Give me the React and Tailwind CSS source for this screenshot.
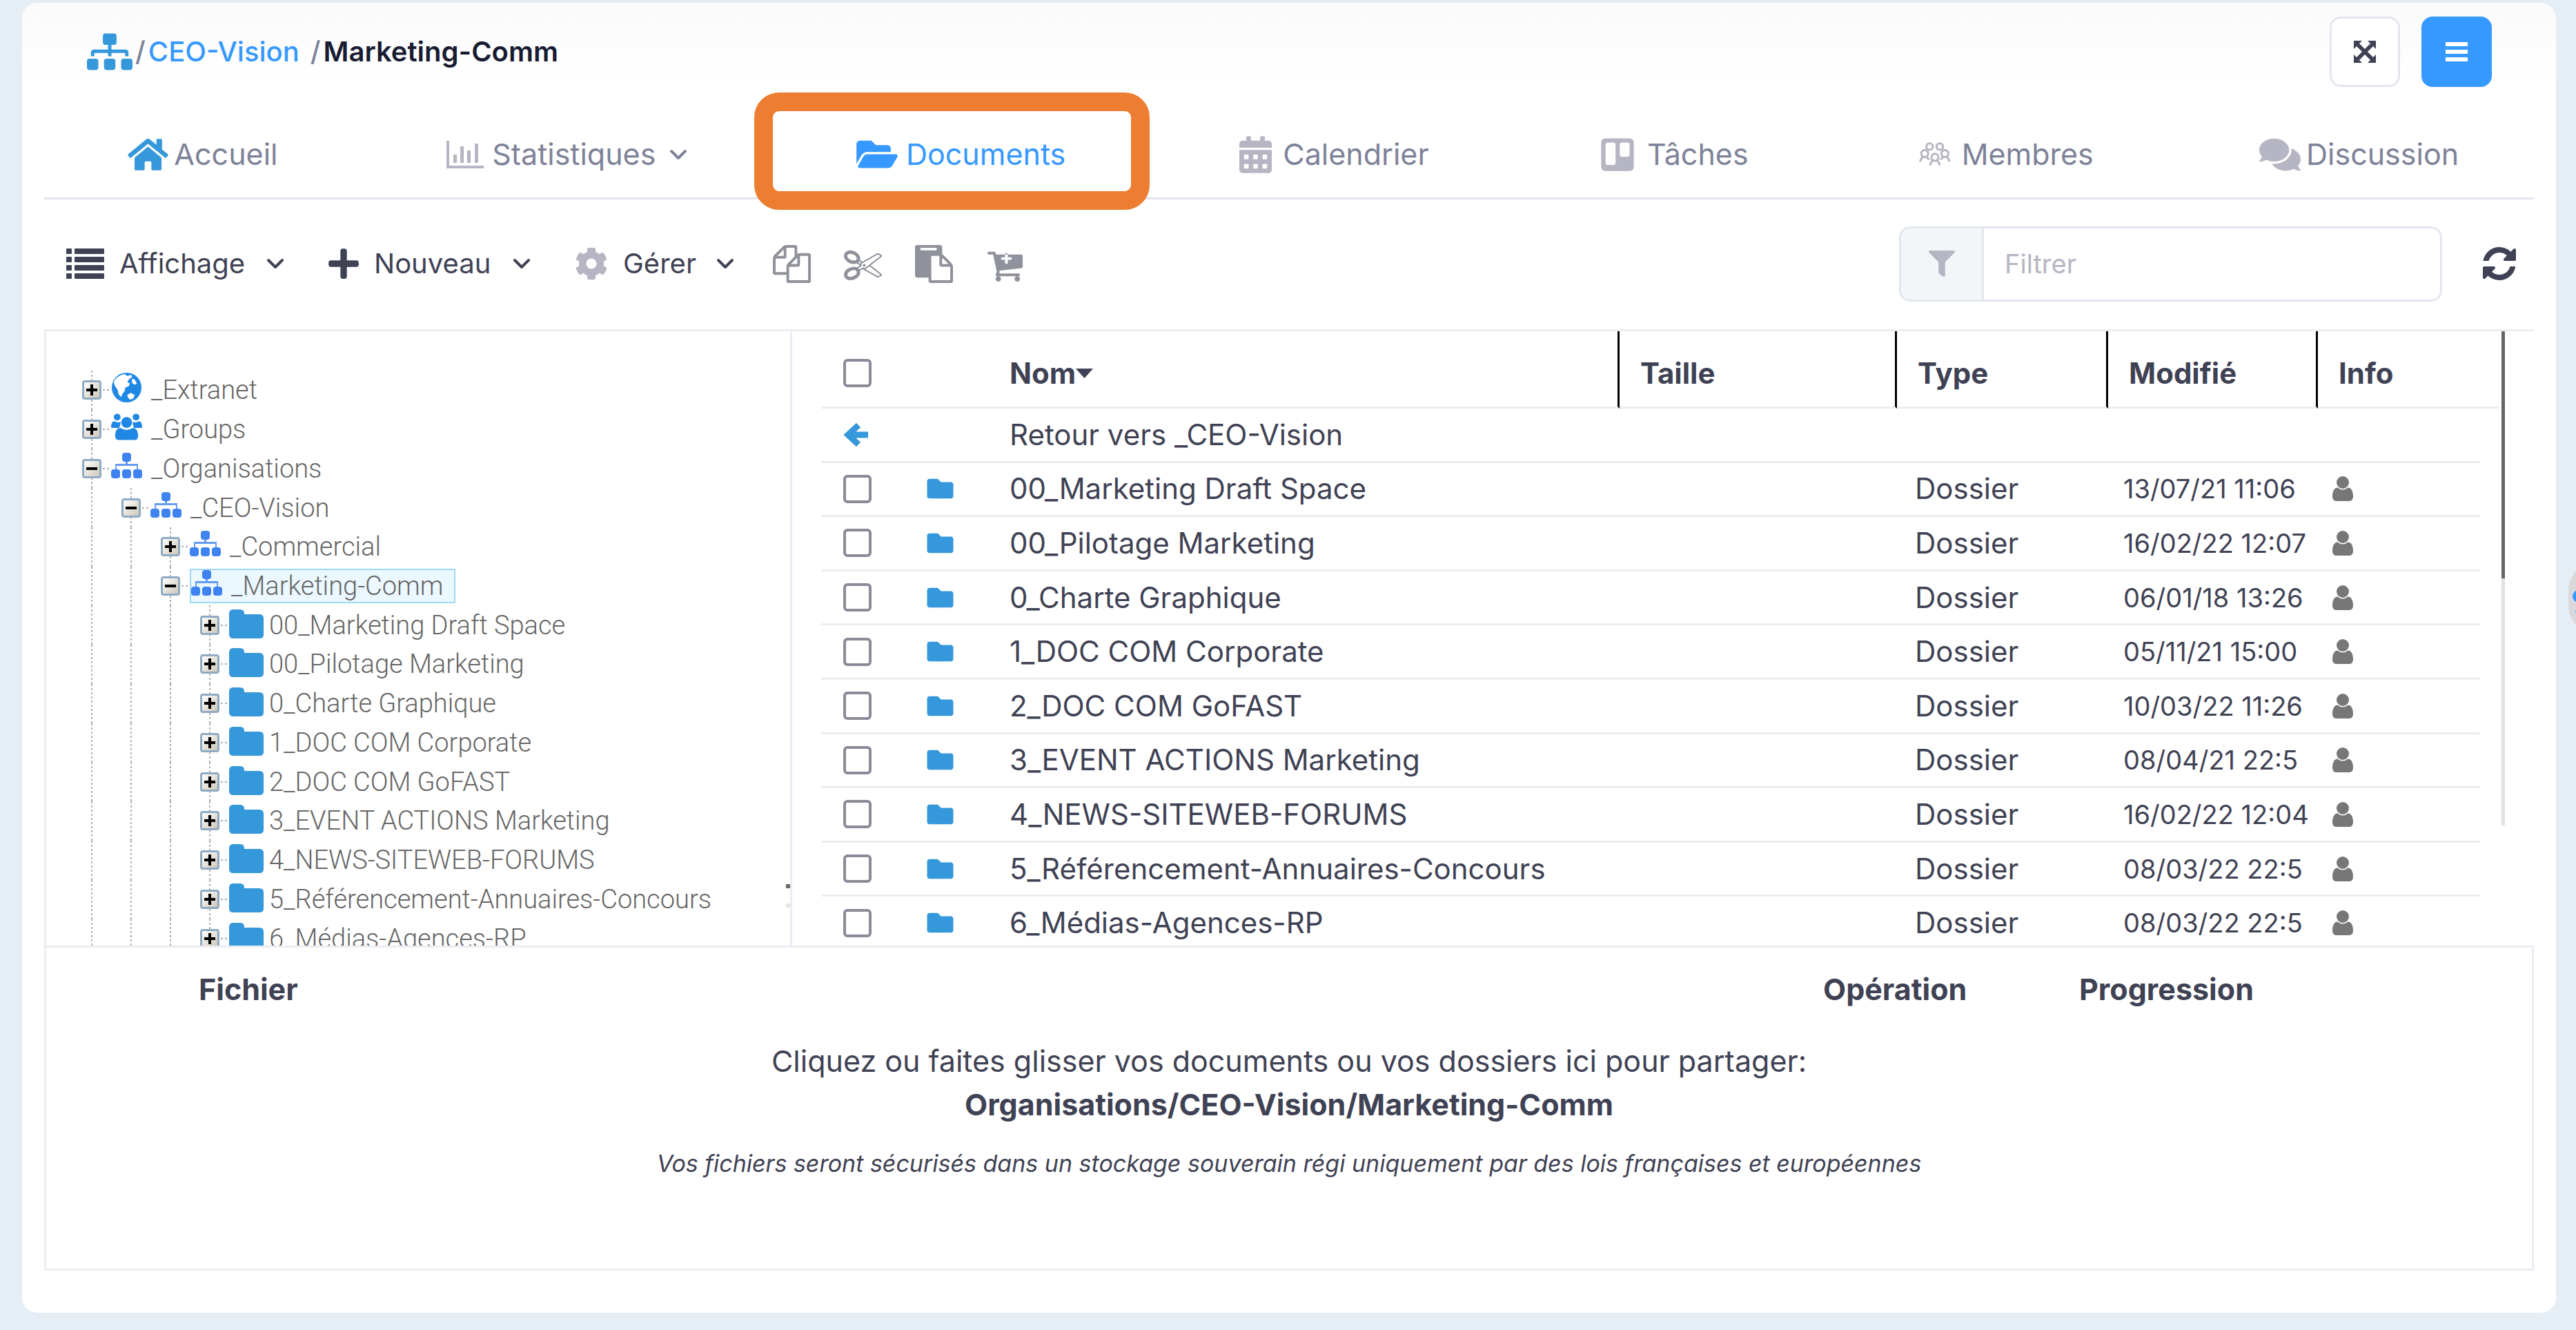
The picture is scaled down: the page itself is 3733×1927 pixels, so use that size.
import React from "react";
import {
  FaHome,
  FaFolderOpen,
  FaFolder,
  FaCalendarAlt,
  FaTrello,
  FaComments,
  FaPlus,
  FaCog,
  FaFilter,
  FaSitemap,
} from "react-icons/fa";

const BLUE = "text-[#3498db]";

/* ---------- icons ---------- */

function Glyph({ d, className, viewBox = "0 0 1792 1792" }) {
  return (
    <svg viewBox={viewBox} className={className} fill="currentColor" aria-hidden="true">
      <path d={d} />
    </svg>
  );
}

const COPY =
  "M1696 384q40 0 68 28t28 68v1216q0 40-28 68t-68 28h-960q-40 0-68-28t-28-68v-288h-544q-40 0-68-28t-28-68v-672q0-40 20-88t48-76l408-408q28-28 76-48t88-20h416q40 0 68 28t28 68v328q68-40 128-40h416zm-544 213l-299 299h299v-299zm-640-384l-299 299h299v-299zm196 647l316-316v-416h-384v416q0 40-28 68t-68 28h-416v640h512v-256q0-40 20-88t48-76zm956 804v-1152h-384v416q0 40-28 68t-68 28h-416v640h896z";
const CUT =
  "M960 896q26 0 45 19t19 45-19 45-45 19-45-19-19-45 19-45 45-19zm300 64l507 398q28 20 25 56-5 35-35 51l-128 64q-13 7-29 7-17 0-31-8l-690-387-110 66q-8 4-12 5 14 49 10 97-7 77-56 147.5t-132 123.5q-132 84-277 84-136 0-222-78-90-84-79-207 7-76 56-147t131-124q132-84 278-84 83 0 151 31 9-13 22-22l122-73-122-73q-13-9-22-22-68 31-151 31-146 0-278-84-82-53-131-124t-56-147q-5-59 15.5-113t63.5-93q85-79 222-79 145 0 277 84 83 52 132 123t56 148q4 48-10 97 4 1 12 5l110 66 690-387q14-8 31-8 16 0 29 7l128 64q30 16 35 51 3 36-25 56zm-681-260q46-42 21-108t-106-117q-92-59-192-59-74 0-113 36-46 42-21 108t106 117q92 59 192 59 74 0 113-36zm-85 745q81-51 106-117t-21-108q-39-36-113-36-100 0-192 59-81 51-106 117t21 108q39 36 113 36 100 0 192-59zm178-613l96 58v-11q0-36 33-56l14-8-79-44-26 26q-3 3-10 11t-12 12q-2 2-4 3.5t-3 2.5zm224 224l96 32 736-576-128-64-768 431v113l-160 96 9 8q2 2 7 6 4 4 11 12t11 12l26 26zm704 416l128-64-520-408-177 138q-2 3-13 7z";
const PASTE =
  "M768 1664h896v-640h-416q-40 0-68-28t-28-68v-416h-384v1152zm256-1440v-64q0-13-9.5-22.5t-22.5-9.5h-704q-13 0-22.5 9.5t-9.5 22.5v64q0 13 9.5 22.5t22.5 9.5h704q13 0 22.5-9.5t9.5-22.5zm256 672h299l-299-299v299zm512 128v672q0 40-28 68t-68 28h-960q-40 0-68-28t-28-68v-160h-544q-40 0-68-28t-28-68v-1344q0-40 28-68t68-28h1088q40 0 68 28t28 68v328q21 13 36 28l408 408q28 28 48 76t20 88z";
const CART =
  "M1216 640q0-26-19-45t-45-19h-128v-128q0-26-19-45t-45-19-45 19-19 45v128h-128q-26 0-45 19t-19 45 19 45 45 19h128v128q0 26 19 45t45 19 45-19 19-45v-128h128q26 0 45-19t19-45zm-512 960q0 53-37.5 90.5t-90.5 37.5-90.5-37.5-37.5-90.5 37.5-90.5 90.5-37.5 90.5 37.5 37.5 90.5zm896 0q0 53-37.5 90.5t-90.5 37.5-90.5-37.5-37.5-90.5 37.5-90.5 90.5-37.5 90.5 37.5 37.5 90.5zm128-1088v512q0 24-16 42.5t-41 21.5l-1044 122q1 7 4.5 21.5t6 26.5 2.5 22q0 16-24 64h920q26 0 45 19t19 45-19 45-45 19h-1024q-26 0-45-19t-19-45q0-14 11-39.5t29.5-59.5 20.5-38l-177-823h-204q-26 0-45-19t-19-45 19-45 45-19h256q16 0 28.5 6.5t20 15.5 13 24.5 7.5 26.5 5.5 29.5 4.5 25.5h1201q26 0 45 19t19 45z";
const USER =
  "M1536 1399q0 109-62.5 187t-150.5 78h-854q-88 0-150.5-78t-62.5-187q0-85 8.5-160.5t31.5-152 58.5-131 94-89 134.5-34.5q131 128 313 128t313-128q76 0 134.5 34.5t94 89 58.5 131 31.5 152 8.5 160.5zm-256-887q0 159-112.5 271.5t-271.5 112.5-271.5-112.5-112.5-271.5 112.5-271.5 271.5-112.5 271.5 112.5 112.5 271.5z";
const REFRESH =
  "M1639 1056q0 5-1 7-64 268-268 434.500t-478 166.500q-146 0-282.500-55t-243.500-157l-129 129q-19 19-45 19t-45-19-19-45v-448q0-26 19-45t45-19h448q26 0 45 19t19 45-19 45l-137 137q71 66 161 102t187 36q134 0 250-65t186-179q11-17 53-117 8-23 30-23h192q13 0 22.500 9.500t9.500 22.500zm25-800v448q0 26-19 45t-45 19h-448q-26 0-45-19t-19-45 19-45l138-138q-148-137-349-137-134 0-250 65t-186 179q-11 17-53 117-8 23-30 23h-199q-13 0-22.500-9.500t-9.500-22.500v-7q65-268 270-434.500t480-166.500q146 0 284 55.500t245 156.500l130-129q19-19 45-19t45 19 19 45z";

function ListIcon({ className }) {
  return (
    <svg viewBox="0 0 55 44" className={className} fill="currentColor" aria-hidden="true">
      {[0, 12, 24, 36].map((y) => (
        <g key={y}>
          <rect x="0" y={y} width="8" height="8" rx="1" />
          <rect x="12" y={y} width="43" height="8" rx="1" />
        </g>
      ))}
    </svg>
  );
}

function ChartIcon({ className }) {
  return (
    <svg viewBox="0 0 54 40" className={className} fill="currentColor" aria-hidden="true">
      <path d="M0 0h4v36h50v4H0z" />
      <path d="M10 20h5v12h-5zM20 8h5v24h-5zM30 14h5v18h-5zM41 4h5v28h-5z" />
    </svg>
  );
}

function MembersIcon({ className }) {
  return (
    <svg viewBox="0 0 136 104" className={className} fill="none" stroke="currentColor" strokeWidth="9" aria-hidden="true">
      <circle cx="45" cy="19" r="14" />
      <circle cx="89" cy="19" r="14" />
      <circle cx="24" cy="49" r="15" />
      <circle cx="111" cy="49" r="15" />
      <circle cx="68" cy="65" r="15" />
      <path d="M4 84q3-14 13-20M32 64q7 3 10 12M131 84q-3-14-13-20M103 64q-7 3-10 12M48 100q1-14 12-21M88 100q-1-14-12-21" />
    </svg>
  );
}

function Chevron({ className }) {
  return (
    <svg viewBox="0 0 26 16" className={className} fill="none" stroke="currentColor" strokeWidth="4" strokeLinecap="round" strokeLinejoin="round" aria-hidden="true">
      <path d="M3 3l10 10L23 3" />
    </svg>
  );
}

function ExpandIcon({ className }) {
  return (
    <svg viewBox="0 0 32 32" className={className} fill="currentColor" aria-hidden="true">
      <path d="M0 0h12L8 4l8 8 8-8-4-4h12v12l-4-4-8 8 8 8 4-4v12H20l4-4-8-8-8 8 4 4H0V20l4 4 8-8-8-8-4 4z" />
    </svg>
  );
}

function BackArrow({ className }) {
  return (
    <svg viewBox="0 0 36 36" className={className} fill="none" stroke="currentColor" strokeWidth="9" aria-hidden="true">
      <path d="M22 4L7 18l15 14M7 18h29" />
    </svg>
  );
}

function GlobeIcon({ className }) {
  return (
    <svg viewBox="0 0 46 46" className={className} aria-hidden="true">
      <circle cx="23" cy="23" r="22" fill="#2088e4" />
      <path fill="#fff" d="M5 12c4-5 9-8 15-9l4 3 6-2 1 4-4 2-3 5 4 2-2 4-5 2-1 5-3 4-2 5-4-4-1-6-4-6-2-5zM31 10l4 1 3 6-3 2-4-3zM24 34l5-3 6 3-2 5-5 2-3-3z" />
    </svg>
  );
}

function GroupIcon({ className }) {
  return (
    <svg viewBox="0 0 46 40" className={className} fill="#2088e4" aria-hidden="true">
      <circle cx="9" cy="6" r="5" />
      <circle cx="37" cy="6" r="5" />
      <path d="M0 21c0-6 2-9 5-9 3 2 6 2 9 1 0 4-1 6-2 9H2q-2 0-2-1zM46 21c0-6-2-9-5-9-3 2-6 2-9 1 0 4 1 6 2 9h10q2 0 2-1z" />
      <circle cx="23" cy="14" r="8" />
      <path d="M6 34c0-8 3-12 8-12q9 6 18 0c5 0 8 4 8 12q0 6-6 6H12q-6 0-6-6z" />
    </svg>
  );
}

function OrgIcon({ className }) {
  return (
    <svg viewBox="0 0 45 38" className={className} fill="#3f83f0" aria-hidden="true">
      <rect x="16" y="0" width="13" height="13" rx="4" />
      <path d="M21 12h3v4h15v8h-2v-5H8v5H6v-8h15z" opacity=".8" />
      <rect x="0" y="24" width="13" height="13" rx="4" />
      <rect x="16" y="24" width="13" height="13" rx="4" />
      <rect x="32" y="24" width="13" height="13" rx="4" />
    </svg>
  );
}

/* ---------- header ---------- */

function Header() {
  return (
    <header className="flex items-start justify-between pl-[62px] pr-[61px] pt-5">
      <nav aria-label="Fil d'Ariane" className="flex h-[102px] items-center text-[40px] font-medium text-[#7e8299]">
        <FaSitemap className="mr-1 h-[54px] w-[66px] text-[#3498db]" aria-hidden="true" />
        <span>/</span>
        <a href="#ceo" className="ml-1 text-[#3699ff]">CEO-Vision</a>
        <span className="ml-4">/</span>
        <a href="#marketing" className="ml-1 font-semibold text-[#181c32]">Marketing-Comm</a>
      </nav>
      <div className="flex gap-[31px]">
        <button type="button" aria-label="Plein écran" className="flex size-[102px] items-center justify-center rounded-2xl border-3 border-[#e4e6ef] bg-white text-[#3f4254]">
          <ExpandIcon className="size-8" />
        </button>
        <button type="button" aria-label="Menu" className="flex size-[102px] flex-col items-center justify-center gap-[5px] rounded-2xl bg-[#3699ff]">
          <span className="h-[6px] w-8 bg-white" />
          <span className="h-[6px] w-8 bg-white" />
          <span className="h-[6px] w-8 bg-white" />
        </button>
      </div>
    </header>
  );
}

const TABS = [
  { label: "Accueil", icon: <FaHome className={`h-[52px] w-[59px] ${BLUE}`} />, gap: "gap-2" },
  { label: "Statistiques", icon: <ChartIcon className="h-[40px] w-[54px]" />, gap: "gap-3", menu: true },
  { label: "Documents", icon: <FaFolderOpen className="h-[53px] w-[60px] text-[#3699ff]" />, gap: "gap-3", active: true },
  { label: "Calendrier", icon: <FaCalendarAlt className="h-[54px] w-[47px]" />, gap: "gap-4" },
  { label: "Tâches", icon: <FaTrello className="size-[54px]" />, gap: "gap-4" },
  { label: "Membres", icon: <MembersIcon className="h-[35px] w-[46px]" />, gap: "gap-4" },
  { label: "Discussion", icon: <FaComments className="h-[54px] w-[60px]" />, gap: "gap-2" },
];

function Tabs() {
  return (
    <nav className="mt-[35px] grid h-[128px] grid-cols-[460fr_596fr_546fr_536fr_448fr_516fr_507fr] border-b-3 border-[#e4e6ef] text-[43px] text-[#7e8299]">
      {TABS.map((t) => (
        <a
          key={t.label}
          href={`#${t.label}`}
          aria-current={t.active ? "page" : undefined}
          className={`relative flex items-center justify-center text-[#b5b5c3] ${t.gap}`}
        >
          {t.icon}
          <span className={t.active ? "text-[#3699ff]" : "text-[#7e8299]"}>{t.label}</span>
          {t.menu && <Chevron className="ml-2 h-4 w-[26px] text-[#7e8299]" />}
          {t.active && (
            <span className="pointer-events-none absolute -top-[27px] right-0 -bottom-[18px] -left-[27px] rounded-[36px] border-[27px] border-[#ed7d31]" />
          )}
        </a>
      ))}
    </nav>
  );
}

/* ---------- toolbar ---------- */

function Toolbar() {
  return (
    <div className="flex h-[188px] items-center justify-between pb-[2px] pl-8 pr-[26px] text-[40px] text-[#3f4254]">
      <div className="flex items-center">
        <button type="button" className="flex w-[316px] items-center">
          <ListIcon className="h-11 w-[55px]" />
          <span className="ml-[22px]">Affichage</span>
          <Chevron className="ml-auto h-4 w-[26px]" />
        </button>
        <button type="button" className="ml-16 flex w-[293px] items-center">
          <FaPlus className="h-[50px] w-11" />
          <span className="ml-[22px]">Nouveau</span>
          <Chevron className="ml-auto h-4 w-[26px]" />
        </button>
        <button type="button" className="ml-16 flex w-[231px] items-center">
          <FaCog className="size-[48px] text-[#b5b5c3]" />
          <span className="ml-[22px]">Gérer</span>
          <Chevron className="ml-auto h-4 w-[26px]" />
        </button>
        <div className="ml-14 flex items-center gap-12 text-[#8f919c]">
          <button type="button" aria-label="Copier"><Glyph d={COPY} className="size-[55px]" /></button>
          <button type="button" aria-label="Couper"><Glyph d={CUT} className="size-[55px]" /></button>
          <button type="button" aria-label="Coller"><Glyph d={PASTE} className="size-[55px]" /></button>
          <button type="button" aria-label="Ajouter au panier"><Glyph d={CART} className="size-[55px]" /></button>
        </div>
      </div>
      <div className="flex items-center gap-[59px]">
        <div className="flex h-[109px] w-[787px] overflow-hidden rounded-2xl border-3 border-[#e4e6ef]">
          <label htmlFor="filter" aria-label="Filtrer" className="flex w-[120px] items-center justify-center border-r-3 border-[#e4e6ef] bg-[#f3f6f9]">
            <FaFilter className="size-[38px] text-[#b5b5c3]" aria-hidden="true" />
          </label>
          <input
            id="filter"
            type="text"
            placeholder="Filtrer"
            className="min-w-0 flex-1 px-[30px] text-[38px] placeholder:text-[#b5b5c3] focus:outline-none"
          />
        </div>
        <button type="button" aria-label="Actualiser">
          <Glyph d={REFRESH} viewBox="128 128 1536 1536" className="size-12" />
        </button>
      </div>
    </div>
  );
}

/* ---------- tree ---------- */

const TREE = [
  { level: 0, label: "_Extranet", icon: "globe" },
  { level: 0, label: "_Groups", icon: "group" },
  { level: 0, label: "_Organisations", icon: "org", open: true },
  { level: 1, label: "_CEO-Vision", icon: "org", open: true },
  { level: 2, label: "_Commercial", icon: "org" },
  { level: 2, label: "_Marketing-Comm", icon: "org", open: true, selected: true },
  { level: 3, label: "00_Marketing Draft Space" },
  { level: 3, label: "00_Pilotage Marketing" },
  { level: 3, label: "0_Charte Graphique" },
  { level: 3, label: "1_DOC COM Corporate" },
  { level: 3, label: "2_DOC COM GoFAST" },
  { level: 3, label: "3_EVENT ACTIONS Marketing" },
  { level: 3, label: "4_NEWS-SITEWEB-FORUMS" },
  { level: 3, label: "5_Référencement-Annuaires-Concours" },
  { level: 3, label: "6_Médias-Agences-RP" },
];

const DOTS_Y =
  "w-[2px] bg-[repeating-linear-gradient(to_bottom,#b0b0b0_0_3px,transparent_3px_6px)]";

function NodeIcon({ kind }) {
  if (kind === "globe") return <GlobeIcon className="-mt-2 mr-[13px] size-[45px]" />;
  if (kind === "group") return <GroupIcon className="-mt-2 mr-[13px] h-[40px] w-[45px]" />;
  if (kind === "org") return <OrgIcon className="-mt-2 mr-[13px] h-[38px] w-[45px]" />;
  return (
    <svg viewBox="0 0 50 42" className="-mt-1 mr-2 h-[42px] w-[50px]" fill="#3498db" aria-hidden="true">
      <path d="M0 6q0-6 6-6h10q6 0 6 6v1h22q6 0 6 6v23q0 6-6 6H6q-6 0-6-6z" />
    </svg>
  );
}

function TreeRow({ node }) {
  return (
    <li className="flex items-center">
      {Array.from({ length: node.level }, (_, i) => (
        <span key={i} className="flex w-[57px] justify-center self-stretch">
          <span className={DOTS_Y} />
        </span>
      ))}
      <span className="relative flex w-[57px] items-center justify-center self-stretch">
        <span className={`${DOTS_Y} absolute inset-y-0`} />
        <span className="absolute right-0 h-[2px] w-3 bg-[repeating-linear-gradient(to_right,#b0b0b0_0_3px,transparent_3px_6px)]" />
        <button
          type="button"
          aria-label={node.open ? "Replier" : "Déplier"}
          className="relative flex size-7 items-center justify-center rounded-[4px] border-3 border-[#8fabc4] bg-linear-to-br from-white to-[#cfc8b8]"
        >
          <span className="h-1 w-4 bg-black" />
          {!node.open && <span className="absolute h-4 w-1 bg-black" />}
        </button>
      </span>
      <a
        href={`#${node.label}`}
        className={
          node.selected
            ? "flex h-[50px] items-center border-2 border-[#9fd9f6] bg-[#ebf8ff] pr-4"
            : "flex h-[50px] items-center"
        }
      >
        <NodeIcon kind={node.icon} />
        <span className="whitespace-nowrap">{node.label}</span>
      </a>
    </li>
  );
}

function Tree() {
  return (
    <div className="flex w-[1081px] shrink-0 justify-between overflow-hidden border-r-3 border-[#ebedf3] pl-[37px] pt-[57px]">
      <ul className="grid h-[851px] auto-rows-fr font-['Roboto',sans-serif] text-[38px] font-light leading-none text-[#666]">
        {TREE.map((n) => (
          <TreeRow key={n.label} node={n} />
        ))}
      </ul>
      <div className="flex flex-col gap-[22px] pt-[744px]">
        <span className="size-[6px] bg-[#6b6b6b]" />
        <span className="size-[6px] bg-[#e4e4e4]" />
      </div>
    </div>
  );
}

/* ---------- file table ---------- */

const FILES = [
  ["00_Marketing Draft Space", "13/07/21 11:06"],
  ["00_Pilotage Marketing", "16/02/22 12:07"],
  ["0_Charte Graphique", "06/01/18 13:26"],
  ["1_DOC COM Corporate", "05/11/21 15:00"],
  ["2_DOC COM GoFAST", "10/03/22 11:26"],
  ["3_EVENT ACTIONS Marketing", "08/04/21 22:5"],
  ["4_NEWS-SITEWEB-FORUMS", "16/02/22 12:04"],
  ["5_Référencement-Annuaires-Concours", "08/03/22 22:5"],
  ["6_Médias-Agences-RP", "08/03/22 22:5"],
];

function Check({ label }) {
  return (
    <input
      type="checkbox"
      aria-label={label}
      className="block size-[41px] appearance-none rounded-[6px] border-4 border-[#8c8a99] bg-white"
    />
  );
}

const TH_BASE = "border-b-3 border-b-[#ebedf3] pt-3 text-left font-bold";
const TH = `${TH_BASE} border-r-3 border-r-black pl-[30px]`;
const TD = "border-b-3 border-[#ebedf3]";

function FileTable() {
  return (
    <div className="flex min-w-0 flex-1 items-start overflow-hidden pl-[42px]">
      <table className="h-[898px] w-full table-fixed border-separate border-spacing-0 text-[42px] leading-none text-[#3f4254]">
        <colgroup>
          <col className="w-[121px]" />
          <col className="w-[122px]" />
          <col />
          <col className="w-[402px]" />
          <col className="w-[306px]" />
          <col className="w-[304px]" />
          <col className="w-[235px]" />
          <col className="w-[27px]" />
        </colgroup>
        <thead>
          <tr className="h-[112px]">
            <th className={`${TH_BASE} pl-8`}><Check label="Tout sélectionner" /></th>
            <th className={TH_BASE} />
            <th className={TH}>
              <button type="button" className="flex items-center font-bold">
                Nom
                <svg viewBox="0 0 25 14" className="h-[14px] w-[25px]" fill="currentColor" aria-hidden="true"><path d="M0 0h25L12.500 14z" /></svg>
              </button>
            </th>
            <th className={TH}>Taille</th>
            <th className={TH}>Type</th>
            <th className={TH}>Modifié</th>
            <th className={`${TH_BASE} pl-[30px]`}>Info</th>
            <th className={TH_BASE} />
          </tr>
        </thead>
        <tbody>
          <tr className="h-[78px]">
            <td className={`${TD} pl-8`}><BackArrow className={`size-9 ${BLUE}`} /></td>
            <td className={TD} />
            <td className={`${TD} pl-[30px]`}><a href="#retour">Retour vers _CEO-Vision</a></td>
            <td className={TD} />
            <td className={TD} />
            <td className={TD} />
            <td className={TD} />
            <td />
          </tr>
          {FILES.map(([name, date]) => (
            <tr key={name} className="h-[78px]">
              <td className={`${TD} pl-8`}><Check label={name} /></td>
              <td className={`${TD} pl-8`}><FaFolder className={`h-[38px] w-[39px] ${BLUE}`} /></td>
              <td className={`${TD} pl-[30px] whitespace-nowrap`}>{name}</td>
              <td className={TD} />
              <td className={`${TD} pl-[26px]`}>Dossier</td>
              <td className={`${TD} pl-[22px] text-[38px] whitespace-nowrap`}>{date}</td>
              <td className={`${TD} pl-5`}>
                <Glyph d={USER} viewBox="256 128 1280 1536" className="h-9 w-8 text-[#777]" />
              </td>
              <td />
            </tr>
          ))}
        </tbody>
      </table>
      <div className="ml-1 mr-[42px] flex h-[716px] w-[5px] shrink-0 flex-col bg-[#e0e0e0]">
        <span className="h-1/2 bg-[#666]" />
      </div>
    </div>
  );
}

/* ---------- upload area ---------- */

function DropZone() {
  return (
    <section className="h-[471px] border-3 border-[#ebedf3] pt-[29px] text-[43px] leading-[63px] text-[#3f4254]">
      <table className="w-full table-fixed text-left">
        <colgroup>
          <col className="w-[221px]" />
          <col />
          <col className="w-[371px]" />
          <col className="w-[656px]" />
        </colgroup>
        <thead>
          <tr>
            <td />
            <th className="font-bold">Fichier</th>
            <th className="font-bold">Opération</th>
            <th className="font-bold">Progression</th>
          </tr>
        </thead>
      </table>
      <div className="mt-[41px] text-center">
        <p>Cliquez ou faites glisser vos documents ou vos dossiers ici pour partager:</p>
        <p className="font-bold">Organisations/CEO-Vision/Marketing-Comm</p>
        <p className="mt-7 text-[34px] leading-[52px] italic">
          Vos fichiers seront sécurisés dans un stockage souverain régi uniquement par des lois françaises et européennes
        </p>
      </div>
    </section>
  );
}

function ChatBubble() {
  return (
    <button
      type="button"
      aria-label="Discussion instantanée"
      className="absolute top-[812px] left-full -ml-[11px] flex h-[109px] w-[109px] flex-col justify-center gap-3 rounded-[44px] bg-[#d9d9dc] pt-2 pl-[6px]"
    >
      <span className="h-[18px] w-6 rounded-full bg-[#3699ff]" />
      <span className="ml-[3px] h-[2px] w-6 bg-[#8fbdf0]" />
    </button>
  );
}

export default function App() {
  return (
    <div className="relative min-h-screen overflow-hidden bg-[#e5edf5] pt-1 pr-[29px] pb-6 pl-8 font-['Inter',sans-serif]">
      <main className="rounded-[22px] bg-white bg-linear-to-b from-[#fafafa] to-white to-6% px-8 pb-[61px]">
        <Header />
        <Tabs />
        <Toolbar />
        <section className="flex h-[893px] border-t-3 border-l-3 border-[#ebedf3]">
          <Tree />
          <FileTable />
        </section>
        <DropZone />
      </main>
      <ChatBubble />
    </div>
  );
}
